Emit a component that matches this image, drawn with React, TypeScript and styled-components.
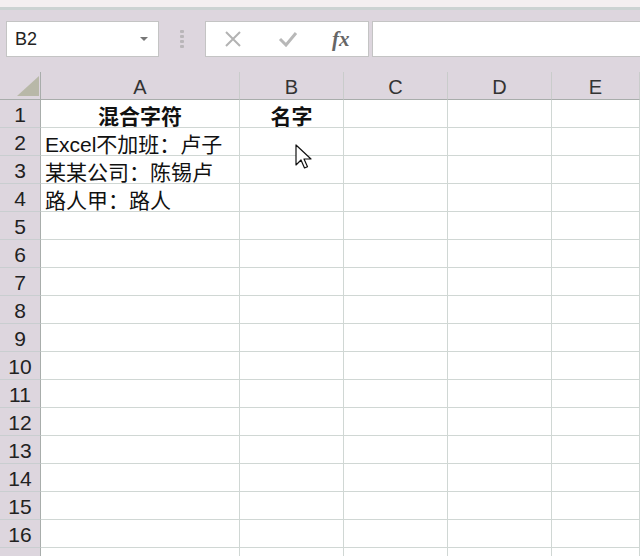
import React from 'react';
import styled, { createGlobalStyle } from 'styled-components';

const GlobalStyle = createGlobalStyle`
    html, body {
        margin: 0;
        padding: 0;
        background: #ffffff;
        overflow: hidden;
    }
    body {
        font-family: "Liberation Sans", "Noto Sans CJK SC", sans-serif;
    }
`;

const Window = styled.div`
    width: 640px;
    height: 556px;
    overflow: hidden;
    position: relative;
    background: #ffffff;
`;

const TitleStrip = styled.div`
    height: 7px;
    background: #f4eff0;
    border-bottom: 3px solid #ccd3d2;
`;

const Toolbar = styled.div`
    height: 51px;
    padding-top: 11px;
    background: #ddd6de;
    display: flex;
    align-items: flex-start;
`;

const Box = styled.div<{ $width?: number }>`
    height: 34px;
    background: #ffffff;
    border: 1px solid #c4c4c4;
    box-sizing: content-box;
    display: flex;
    align-items: center;
    ${({ $width }) => ($width ? `width: ${$width}px;` : 'flex: 1;')}
`;

const NameBox = styled(Box)`
    margin-left: 6px;
    padding: 0 10px 0 8px;
    justify-content: space-between;
    font-size: 18px;
    color: #222;
`;

const DropArrow = styled.span`
    width: 0;
    height: 0;
    border-left: 4px solid transparent;
    border-right: 4px solid transparent;
    border-top: 4px solid #777;
`;

const Grip = styled.div`
    width: 46px;
    height: 36px;
    display: flex;
    flex-direction: column;
    align-items: center;
    justify-content: center;
    gap: 2px;
`;

const GripDot = styled.span`
    width: 4px;
    height: 3px;
    background: #b9b6b9;
    border-radius: 1px;
`;

const FuncBox = styled(Box)`
    padding-left: 18px;
    gap: 36px;
`;

const FormulaInput = styled(Box)`
    margin-left: 3px;
    border-right: none;
`;

const Fx = styled.span`
    font-family: "Liberation Serif", "DejaVu Serif", serif;
    font-style: italic;
    font-weight: bold;
    font-size: 21px;
    color: #666;
    margin-left: -2px;
`;

const Grid = styled.div`
    display: grid;
    grid-template-columns: 41px 199px 104px 104px 104px 1fr;
    grid-auto-rows: 28px;
`;

const ColHead = styled.div`
    background: #ddd6de;
    border-right: 1px solid #c9cccb;
    border-bottom: 1px solid #a8adab;
    display: flex;
    align-items: center;
    justify-content: center;
    font-size: 20px;
    color: #333;
    box-sizing: border-box;
    padding-top: 4px;
`;

const Corner = styled(ColHead)`
    justify-content: flex-end;
    align-items: flex-end;
    padding: 0 1px 3px 0;
    border-right: 1px solid #a8adab;
`;

const RowHead = styled.div`
    background: #ddd6de;
    border-right: 1px solid #a8adab;
    border-bottom: 1px solid #c9ced0;
    display: flex;
    align-items: center;
    justify-content: center;
    font-size: 21px;
    color: #222;
    box-sizing: border-box;
    padding-top: 3px;
`;

const Cell = styled.div<{ $bold?: boolean }>`
    border-right: 1px solid #d0d7d4;
    border-bottom: 1px solid #d0d7d4;
    box-sizing: border-box;
    display: flex;
    align-items: center;
    justify-content: ${({ $bold }) => ($bold ? 'center' : 'flex-start')};
    padding-left: ${({ $bold }) => ($bold ? '0' : '4px')};
    padding-top: 2px;
    font-size: 21px;
    font-weight: ${({ $bold }) => ($bold ? 'bold' : 'normal')};
    color: #111;
    white-space: nowrap;
    overflow: visible;
`;

const Pointer = styled.svg`
    position: absolute;
    left: 295px;
    top: 144px;
`;

const columns = ['A', 'B', 'C', 'D', 'E'];

const data: Record<number, string[]> = {
    1: ['混合字符', '名字'],
    2: ['Excel不加班：卢子'],
    3: ['某某公司：陈锡卢'],
    4: ['路人甲：路人'],
};

const App = () => {
    const rows = Array.from({ length: 17 }, (_, i) => i + 1);

    return (
        <Window>
            <GlobalStyle />
            <TitleStrip />
            <Toolbar>
                <NameBox $width={133}>
                    <span>B2</span>
                    <DropArrow />
                </NameBox>
                <Grip>
                    <GripDot />
                    <GripDot />
                    <GripDot />
                    <GripDot />
                </Grip>
                <FuncBox $width={144}>
                    <svg width="18" height="16" viewBox="0 0 18 16">
                        <path d="M2 1 L16 15 M16 1 L2 15" stroke="#b3b3b3" strokeWidth="2" fill="none" />
                    </svg>
                    <svg width="20" height="16" viewBox="0 0 20 16">
                        <path d="M2 8 L8 14 L18 2" stroke="#b8b8b8" strokeWidth="3" fill="none" />
                    </svg>
                    <Fx>fx</Fx>
                </FuncBox>
                <FormulaInput />
            </Toolbar>
            <Grid>
                <Corner>
                    <svg width="22" height="20" viewBox="0 0 22 20">
                        <polygon points="22,0 22,20 0,20" fill="#b8b8a8" />
                    </svg>
                </Corner>
                {columns.map((c) => (
                    <ColHead key={c}>{c}</ColHead>
                ))}
                {rows.map((r) => (
                    <React.Fragment key={r}>
                        <RowHead>{r < 17 ? r : ''}</RowHead>
                        {columns.map((c, ci) => (
                            <Cell key={c} $bold={r === 1}>
                                {data[r]?.[ci] ?? ''}
                            </Cell>
                        ))}
                    </React.Fragment>
                ))}
            </Grid>
            <Pointer width="18" height="28" viewBox="0 0 18 28">
                <path
                    d="M1 1 L1 21 L6 16 L9.5 24 L12.5 22.8 L9 15 L16 15 Z"
                    fill="#ffffff"
                    stroke="#111"
                    strokeWidth="1.2"
                    strokeLinejoin="round"
                />
            </Pointer>
        </Window>
    );
};

export default App;
